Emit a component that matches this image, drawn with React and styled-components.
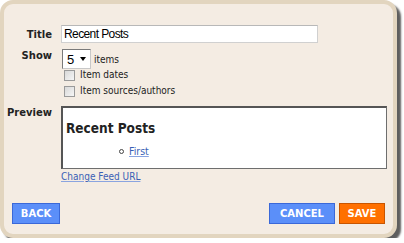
import React from "react";
import styled, { createGlobalStyle } from "styled-components";

const Global = createGlobalStyle`
  html, body { margin: 0; padding: 0; background: #ffffff; }
  body { font-family: "DejaVu Sans", Verdana, sans-serif; }
`;

const Frame = styled.div`
  box-sizing: border-box;
  width: 397px;
  height: 238px;
  border: 4px solid #e2d5bf;
  border-radius: 13px;
  background: #f4ece3;
  box-shadow: 4px 4px 2px rgba(40, 40, 40, 0.75);
  padding: 21px 8px 0 0;
  display: flex;
  flex-direction: column;
`;

const Form = styled.div`
  display: grid;
  grid-template-columns: 48px 1fr;
  column-gap: 9px;
  align-items: start;
`;

const Label = styled.div`
  text-align: right;
  font-size: 10px;
  font-weight: bold;
  color: #222;
  line-height: 12px;
  padding-top: ${(p) => p.$top || 0}px;
`;

const Field = styled.div`
  display: flex;
  flex-direction: column;
  margin-bottom: ${(p) => p.$mb || 0}px;
`;

const TextInput = styled.input`
  box-sizing: border-box;
  width: 257px;
  height: 18px;
  border: 1px solid #d0d0d0;
  border-top-color: #b8b8b8;
  background: #fff;
  font-family: "Liberation Sans", Arial, sans-serif;
  font-size: 12px;
  letter-spacing: -0.6px;
  padding: 0 2px;
  color: #000;
  outline: none;
`;

const ShowRow = styled.div`
  display: flex;
  align-items: flex-end;
  gap: 3px;
  padding-left: 1px;
`;

const Select = styled.div`
  box-sizing: border-box;
  width: 29px;
  height: 20px;
  background: #fff;
  border: 1px solid #7a7a7a;
  border-right-color: #c8c8c8;
  border-bottom-color: #c8c8c8;
  display: flex;
  align-items: center;
  justify-content: space-between;
  padding: 0 4px 0 4px;
  font-family: "Liberation Sans", Arial, sans-serif;
  font-size: 13px;
  color: #000;
`;

const Caret = styled.span`
  width: 0;
  height: 0;
  border-left: 3px solid transparent;
  border-right: 3px solid transparent;
  border-top: 4px solid #000;
`;

const Small = styled.span`
  font-family: "DejaVu Sans Condensed", "DejaVu Sans", Verdana, sans-serif;
  font-size: 10px;
  color: #222;
  line-height: 12px;
  margin-bottom: ${(p) => p.$mb || 0}px;
`;

const CheckRow = styled.label`
  display: flex;
  align-items: center;
  gap: 5px;
  height: 16px;
  padding-left: 3px;
  margin-top: ${(p) => p.$mt || 0}px;
`;

const Box = styled.span`
  box-sizing: border-box;
  width: 11px;
  height: 11px;
  border: 1px solid #9a9a9a;
  background: linear-gradient(135deg, #d8d8d8, #f6f6f6);
`;

const Preview = styled.div`
  box-sizing: border-box;
  width: 326px;
  height: 63px;
  background: #fff;
  border: 1px solid #6e6e6e;
  border-top: 2px solid #555;
  border-left: 2px solid #555;
  padding: 12px 0 0 3px;
`;

const PreviewTitle = styled.div`
  font-family: "DejaVu Sans Condensed", "DejaVu Sans", Verdana, sans-serif;
  font-size: 13.5px;
  line-height: 16px;
  font-weight: bold;
  color: #222;
`;

const List = styled.ul`
  margin: 9px 0 0 0;
  padding: 0 0 0 53px;
  list-style: none;
`;

const Item = styled.li`
  display: flex;
  align-items: center;
  gap: 5px;
  line-height: 13px;
`;

const Circle = styled.span`
  box-sizing: border-box;
  width: 5px;
  height: 5px;
  border: 1px solid #444;
  border-radius: 50%;
`;

const Link = styled.a`
  font-family: "DejaVu Sans Condensed", "DejaVu Sans", Verdana, sans-serif;
  color: #3a5fb5;
  text-decoration: underline;
  text-decoration-color: #8aa4e0;
  font-size: ${(p) => p.$size || 10}px;
  line-height: 12px;
  cursor: pointer;
`;

const LinkRow = styled.div`
  margin-top: 0;
  line-height: 12px;
`;

const Buttons = styled.div`
  margin-top: auto;
  margin-bottom: 10px;
  display: flex;
  align-items: center;
  padding-left: 8px;
  gap: 4px;
`;

const Spacer = styled.div`
  flex: 1;
`;

const Button = styled.button`
  box-sizing: border-box;
  height: 21px;
  width: ${(p) => p.$w}px;
  border: 1px solid ${(p) => (p.$orange ? "#c85500" : "#3a68d8")};
  background: ${(p) => (p.$orange ? "#ff7000" : "#5b8ff9")};
  color: #fff;
  font-family: "DejaVu Sans", Verdana, sans-serif;
  font-size: 10px;
  font-weight: bold;
  padding: 0;
  cursor: pointer;
`;

export default function App() {
  return (
    <>
      <Global />
      <Frame>
        <Form>
          <Label $top={4}>Title</Label>
          <Field $mb={6}>
            <TextInput defaultValue="Recent Posts" />
          </Field>

          <Label $top={1}>Show</Label>
          <Field $mb={7}>
            <ShowRow>
              <Select>
                5<Caret />
              </Select>
              <Small $mb={3}>items</Small>
            </ShowRow>
            <CheckRow $mt={-2}>
              <Box />
              <Small>Item dates</Small>
            </CheckRow>
            <CheckRow>
              <Box />
              <Small>Item sources/authors</Small>
            </CheckRow>
          </Field>

          <Label $top={1}>Preview</Label>
          <Field>
            <Preview>
              <PreviewTitle>Recent Posts</PreviewTitle>
              <List>
                <Item>
                  <Circle />
                  <Link $size={10.5}>First</Link>
                </Item>
              </List>
            </Preview>
            <LinkRow>
              <Link $size={10}>Change Feed URL</Link>
            </LinkRow>
          </Field>
        </Form>
        <Buttons>
          <Button $w={48}>BACK</Button>
          <Spacer />
          <Button $w={66}>CANCEL</Button>
          <Button $w={46} $orange>SAVE</Button>
        </Buttons>
      </Frame>
    </>
  );
}
